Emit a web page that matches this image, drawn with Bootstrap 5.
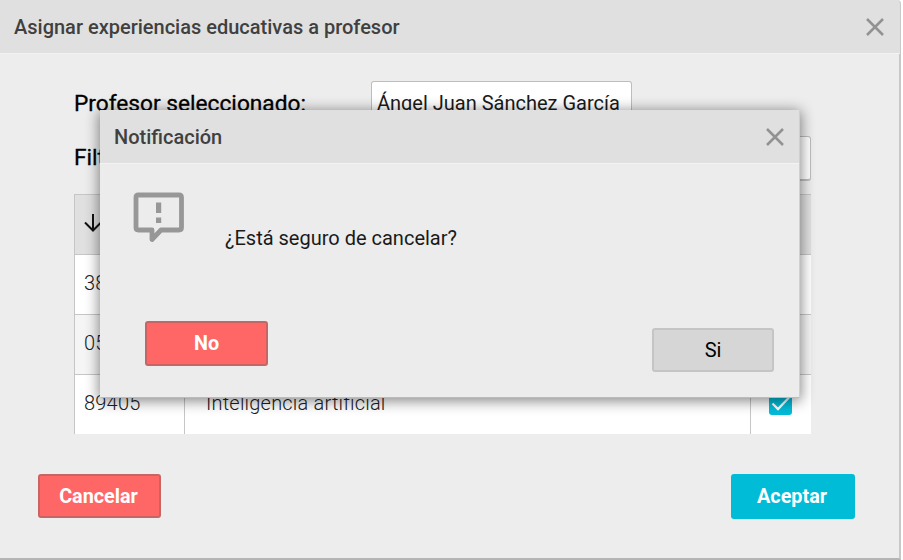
<!DOCTYPE html>
<html lang="es">
<head>
<meta charset="utf-8">
<title>Asignar experiencias educativas</title>
<meta name="viewport" content="width=device-width, initial-scale=1">
<link rel="stylesheet" href="https://cdn.jsdelivr.net/npm/bootstrap@5.3.0/dist/css/bootstrap.min.css">
<style>
body{font-family:Roboto,"Liberation Sans",sans-serif;background:#fff;color:#000;overflow:hidden;font-size:20px;line-height:24px}
.win{width:901px;height:559.5px;background:#ededed;border-right:2px solid #c8c8c8;border-bottom:2px solid #b5b5b5;border-top-right-radius:4px}
.bar{height:54px;background:#e0e0e0;border-bottom:1px solid #f3f3f3;padding:1px 16px 0 14px;color:#404040;font-weight:500;font-size:20px}
.bar svg{width:18px;height:18px}
.dialog .bar{padding-right:15px}
.win>.bar{width:900px;border-top-right-radius:4px}
.panel{margin:27px 0 0 74px;width:737px}
.lbl{font-size:22.7px;width:297px;font-weight:400;-webkit-text-stroke:.3px #000}
.field{height:45px;background:#fff;border:1.5px solid #bdbdbd;border-bottom-width:2px;border-radius:3px;padding:0 5px 1px;color:#1a1a1a}
.f-name{width:261px}
.f-row{margin:10px 0 13px}
.f-row .lbl{padding-bottom:1px}
.grid-row{height:60px;border-top:1px solid #c6c6c6;border-left:1px solid #c6c6c6;background:#fff;color:#202020;font-weight:300;letter-spacing:.2px}
.grid-row.head{background:#e0e0e0;color:#111}
.grid-row.alt{background:#f5f5f5}
.cell{padding-bottom:3px}
.c1{width:110px;padding-left:9px;border-right:1px solid #c6c6c6}
.c2{width:566px;padding-left:21px;border-right:1px solid #c6c6c6}
.chk{padding:0 1px 3px 0}
.check{width:23px;height:23px;background:#00bcd9;border-radius:3px}
.act{width:123px;height:44px;border-radius:3px;padding:1px 0 0;font-size:19.8px;font-weight:700;--bs-btn-border-width:2px}
.act-red{background:#ff6767;border-color:#c76464;color:#fff;padding-right:2px}
.act-cyan{width:124px;height:45px;background:#00bcd7;border-color:#00bcd7;color:#fff;padding-right:2px}
.act-gray{background:#d6d6d6;border-color:#c5c5c5;color:#000;font-size:20px;font-weight:400;padding:0}
.foot{padding:0 44px 0 38px;margin-top:40px}
.dialog{left:100px;top:110px;width:700px;height:288px;background:#ececec;border-right:1px solid #d0d0d0;border-bottom:1px solid #bbb;box-shadow:0 2px 14px 1px rgba(0,0,0,.48);border-radius:1px}
.d-body{padding:28px 0 0 33px;height:157px}
.msg{padding:34px 0 0 41px;color:#1a1a1a}
.d-foot{padding:0 25px 0 45px}
.d-foot .act-red{height:45px;padding:0}
.d-foot .act-gray{margin-top:7px;width:122px}
</style>
<script src="https://cdn.jsdelivr.net/npm/bootstrap@5.3.0/dist/js/bootstrap.bundle.min.js"></script>
</head>
<body>
<main class="win">
  <header class="bar d-flex align-items-center justify-content-between"><span>Asignar experiencias educativas a profesor</span>
    <svg viewBox="0 0 18 18" fill="none" stroke="#929292" stroke-width="2.5"><path d="M1 1 17 17M17 1 1 17"/></svg></header>
  <section class="panel">
    <div class="d-flex align-items-center"><span class="lbl">Profesor seleccionado:</span><div class="field f-name d-flex align-items-center text-nowrap">Ángel Juan Sánchez García</div></div>
    <div class="f-row d-flex align-items-center"><span class="lbl">Filtrar</span><div class="field flex-fill"></div></div>
    <div class="grid-row head d-flex"><div class="c1 cell d-flex align-items-center"><svg width="18" height="18" viewBox="0 0 18 18" fill="none" stroke="currentColor" stroke-width="2"><path d="M9 0V16M1 8.5 9 16.5 17 8.5"/></svg></div><div class="c2"></div></div>
    <div class="grid-row d-flex"><div class="c1 cell d-flex align-items-center">38</div><div class="c2"></div></div>
    <div class="grid-row alt d-flex"><div class="c1 cell d-flex align-items-center">05</div><div class="c2"></div></div>
    <div class="grid-row d-flex"><div class="c1 cell d-flex align-items-center">89405</div><div class="c2 cell d-flex align-items-center">Inteligencia artificial</div><div class="flex-fill chk d-flex align-items-center justify-content-center"><span class="check d-flex"><svg width="23" height="23" viewBox="0 0 23 23" fill="none" stroke="#fff" stroke-width="2.3"><path d="M3.500 11.500 9 17 20 5.500"/></svg></span></div></div>
  </section>
  <footer class="foot d-flex justify-content-between"><button class="btn act act-red">Cancelar</button><button class="btn act act-cyan">Aceptar</button></footer>
</main>
<div class="dialog position-absolute" role="dialog">
  <header class="bar d-flex align-items-center justify-content-between"><span>Notificación</span>
    <svg viewBox="0 0 18 18" fill="none" stroke="#929292" stroke-width="2.5"><path d="M1 1 17 17M17 1 1 17"/></svg></header>
  <div class="d-flex d-body">
    <svg width="51" height="51" viewBox="0 0 51 51"><path fill="none" stroke="#979797" stroke-width="4.800" stroke-linejoin="round" d="M5.500 3H46Q48.500 3 48.500 5.500V35.500Q48.500 38 46 38H28L19 47.500V38H5.500Q3 38 3 35.500V5.500Q3 3 5.500 3Z"/><path fill="#979797" d="M23 10.500H28.200V21H23ZM23 25.500H28.200V31H23Z"/></svg>
    <p class="msg mb-0">¿Está seguro de cancelar?</p>
  </div>
  <div class="d-flex justify-content-between align-items-start d-foot"><button class="btn act act-red">No</button><button class="btn act act-gray">Si</button></div>
</div>
</body>
</html>
